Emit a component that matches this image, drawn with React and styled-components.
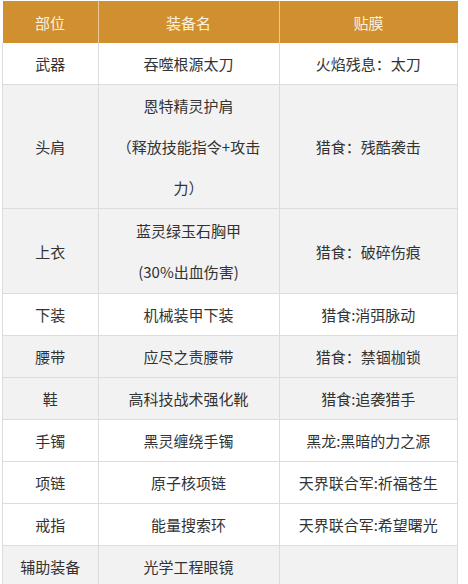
import styled, { createGlobalStyle } from 'styled-components';

const GlobalStyle = createGlobalStyle`
	body {
		margin: 0;
		background: #fff;
		font-family: 'Noto Sans CJK SC', 'Liberation Sans', sans-serif;
	}
`;

const Page = styled.div`
	padding: 1px 0 0 2px;
`;

const Table = styled.table`
	width: 453px;
	border-collapse: collapse;
	table-layout: fixed;
	font-size: 15px;
	color: #333;
`;

const HeadCell = styled.th`
	width: ${(props) => props.$width}px;
	height: 42px;
	padding: 0;
	background-color: #d0902f;
	color: #fdf1de;
	font-weight: normal;
	text-align: center;
	border-left: 1px solid #ecc898;
	&:first-child {
		border-left: none;
	}
`;

const Row = styled.tr`
	background-color: ${(props) => (props.$gray ? '#f2f2f2' : '#fff')};
`;

const Cell = styled.td`
	padding: 0;
	height: ${(props) => props.$height || 41}px;
	line-height: 41px;
	text-align: center;
	vertical-align: middle;
	border: 1px solid #dcdcdc;
	border-top: none;
	word-break: break-all;
`;

const Line = styled.div`
	line-height: 41px;
`;

const rows = [
	{ part: '武器', name: ['吞噬根源太刀'], film: '火焰残息：太刀' },
	{ part: '头肩', name: ['恩特精灵护肩', '（释放技能指令+攻击', '力）'], film: '猎食：残酷袭击', gray: true, height: 123 },
	{ part: '上衣', name: ['蓝灵绿玉石胸甲', '(30%出血伤害)'], film: '猎食：破碎伤痕', gray: true, height: 84 },
	{ part: '下装', name: ['机械装甲下装'], film: '猎食:消弭脉动' },
	{ part: '腰带', name: ['应尽之责腰带'], film: '猎食：禁锢枷锁', gray: true },
	{ part: '鞋', name: ['高科技战术强化靴'], film: '猎食:追袭猎手', gray: true },
	{ part: '手镯', name: ['黑灵缠绕手镯'], film: '黑龙:黑暗的力之源' },
	{ part: '项链', name: ['原子核项链'], film: '天界联合军:祈福苍生' },
	{ part: '戒指', name: ['能量搜索环'], film: '天界联合军:希望曙光' },
	{ part: '辅助装备', name: ['光学工程眼镜'], film: '', gray: true },
];

export default function App() {
	return (
		<Page>
			<GlobalStyle />
			<Table>
				<thead>
					<tr>
						<HeadCell $width={95}>部位</HeadCell>
						<HeadCell $width={180}>装备名</HeadCell>
						<HeadCell $width={178}>贴膜</HeadCell>
					</tr>
				</thead>
				<tbody>
					{rows.map((row) => (
						<Row key={row.part} $gray={row.gray}>
							<Cell $height={row.height}>{row.part}</Cell>
							<Cell $height={row.height}>
								{row.name.map((line) => (
									<Line key={line}>{line}</Line>
								))}
							</Cell>
							<Cell $height={row.height}>{row.film}</Cell>
						</Row>
					))}
				</tbody>
			</Table>
		</Page>
	);
}
